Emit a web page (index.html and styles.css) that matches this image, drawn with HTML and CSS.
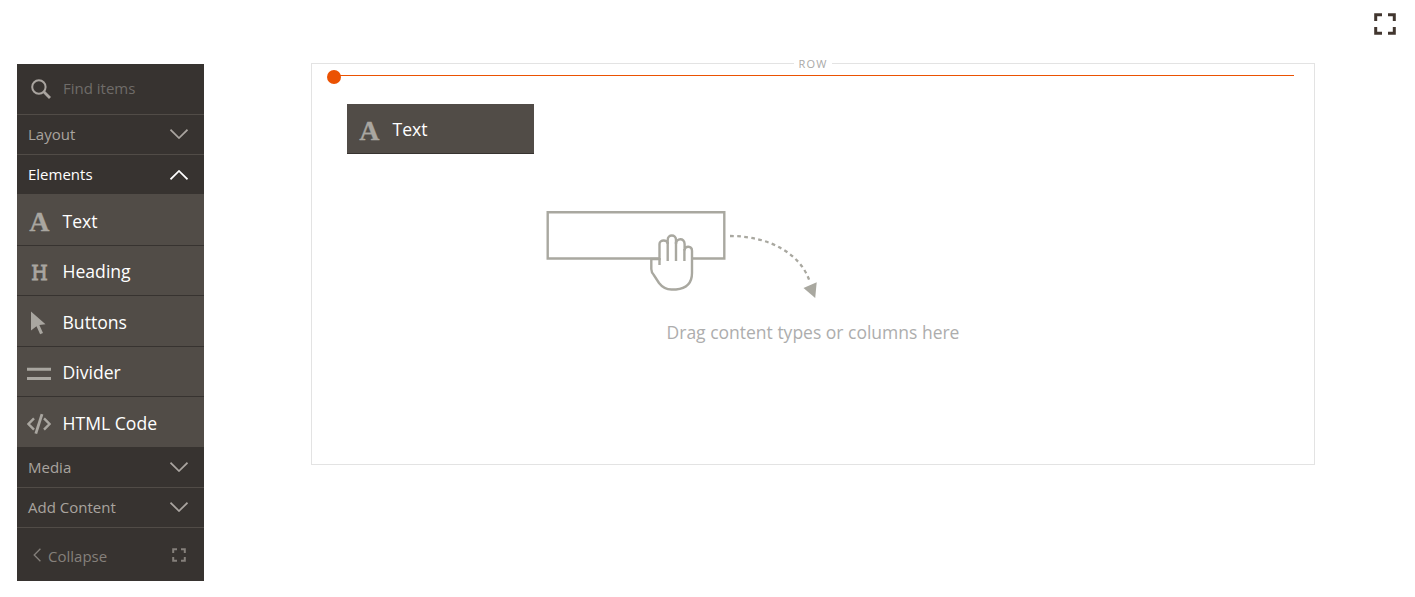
FILE: index.html
```
<!DOCTYPE html>
<html lang="en">
<head>
<meta charset="utf-8">
<title>Page Builder</title>
<link rel="stylesheet" href="styles.css">
</head>
<body>
<div class="page">
  <aside class="panel">
    <div class="search">
      <svg width="20" height="20" viewBox="0 0 20 20" fill="none" stroke="currentColor"><circle cx="7.9" cy="8" r="6.7" stroke-width="2"/><path d="M12.8 12.8 19 19" stroke-width="2.8"/></svg>
      <span>Find items</span>
    </div>
    <div class="group layout"><span>Layout</span><svg class="chev" viewBox="0 0 18 10"><path d="M.5 .7 9 9 17.5 .7"/></svg></div>
    <div class="group open"><span>Elements</span><svg class="chev" viewBox="0 0 18 10"><path d="M.5 9.3 9 1 17.5 9.3"/></svg></div>
    <div class="item first"><span class="icon letter-a">A</span><span>Text</span></div>
    <div class="item"><span class="icon letter-h">H</span><span>Heading</span></div>
    <div class="item tall"><span class="icon"><svg width="24" height="24" viewBox="0 0 24 24" fill="currentColor"><path d="M4 .5 18.5 13.3 12.4 14 16 21.9 13.1 23.3 9.5 15.3 4 19.5Z"/></svg></span><span>Buttons</span></div>
    <div class="item"><span class="icon"><svg width="24" height="24" viewBox="0 0 24 24" fill="currentColor"><path d="M0 5.8H24V8.8H0ZM0 14.9H24V17.9H0Z"/></svg></span><span>Divider</span></div>
    <div class="item last"><span class="icon"><svg width="24" height="24" viewBox="0 0 24 24" fill="none" stroke="currentColor" stroke-width="2.4"><path d="M7 6.3 1.5 12 7 17.7M17 6.3 22.5 12 17 17.7"/><path d="M15 2.2 8.8 21.7" stroke-width="2.8"/></svg></span><span>HTML Code</span></div>
    <div class="group media"><span>Media</span><svg class="chev" viewBox="0 0 18 10"><path d="M.5 .7 9 9 17.5 .7"/></svg></div>
    <div class="group layout"><span>Add Content</span><svg class="chev" viewBox="0 0 18 10"><path d="M.5 .7 9 9 17.5 .7"/></svg></div>
    <div class="footer">
      <svg width="8" height="14" viewBox="0 0 8 14" fill="none" stroke="currentColor" stroke-width="1.3"><path d="M7.4 .8 1.2 7 7.4 13.2"/></svg>
      <span>Collapse</span>
      <svg class="expand" width="14" height="14" viewBox="0 0 14 14" fill="none" stroke="currentColor" stroke-width="2"><path d="M1.2 5V1.2H5M9 1.2H12.8V5M12.8 9V12.8H9M5 12.8H1.2V9"/></svg>
    </div>
  </aside>
  <main class="stage">
    <span class="row-label">ROW</span>
    <div class="drop-line"></div>
    <div class="dragged"><span class="icon letter-a">A</span><span>Text</span></div>
    <svg class="hint-art" width="290" height="105" viewBox="540 200 290 105" fill="none" stroke="#a9a8a0" stroke-width="2.4">
      <path d="M547.7 212.2H724.3V258.5H547.7Z"/>
      <path d="M651.3 259V269Q651.5 272.5 653.5 274.5L659 283Q664 289.5 671.5 289.5H676Q692 288 692 273V251C692 245.5 684.6 245.5 684.6 250.5V244C684.6 237.5 676 238 676 244V240C676 234 667.7 234 667.7 240V244C667.7 239.2 659.5 239.5 659.5 244V259Z" fill="#fff"/>
      <path d="M659.5 258V265M667.7 242V261M676 242V261M684.4 249V261"/>
      <path d="M730 236C771 236 801 255 809.5 281" stroke-width="2.3" stroke-dasharray="3.7 3.4"/>
      <path d="M803.5 288 816.7 282.3 815.2 298Z" fill="#a9a8a0" stroke="none"/>
    </svg>
    <p class="hint">Drag content types or columns here</p>
  </main>
  <svg class="fullscreen" width="22" height="22" viewBox="0 0 22 22" fill="none" stroke="#41362f" stroke-width="3"><path d="M1.7 8V1.7H8M14 1.7H20.3V8M20.3 14V20.3H14M8 20.3H1.7V14"/></svg>
</div>
</body>
</html>
```
FILE: styles.css
```
* { box-sizing: border-box; }
body { margin: 0; background: #fff; font-family: "Open Sans", sans-serif; }
.page {
  width: 1415px;
  height: 597px;
  overflow: hidden;
  display: flex;
  align-items: flex-start;
  padding-left: 17px;
}
.panel {
  width: 187px;
  height: 517px;
  margin-top: 64px;
  background: #373330;
  color: #a9a49f;
  font-size: 15px;
}
.search {
  height: 51px;
  display: flex;
  align-items: center;
  gap: 12px;
  padding: 0 14px 1px;
  border-bottom: 1px solid #514c47;
}
.search span { margin-bottom: 2px; color: #6f6c69; }
.group {
  height: 40px;
  display: flex;
  align-items: center;
  justify-content: space-between;
  padding: 0 16px 0 11px;
  border-bottom: 1px solid #514c47;
}
.layout { padding-bottom: 2px; }
.media { height: 41px; }
.open { color: #fff; }
.open span { margin-bottom: 2px; }
.chev { width: 18px; height: 10px; fill: none; stroke: currentColor; stroke-width: 1.7; }
.item, .dragged {
  height: 50px;
  display: flex;
  align-items: center;
  gap: 11.1px;
  padding: 1px 10px 0;
  background: #514c47;
  border-bottom: 1px solid #373330;
  color: #fff;
  font-size: 17.6px;
}
.item.first, .item.tall { height: 51px; }
.item.last { padding-top: 3px; border-bottom-color: #514c47; }
.icon {
  width: 24px;
  height: 24px;
  flex: none;
  display: flex;
  align-items: center;
  justify-content: center;
  margin: 3px 0 0 .4px;
  color: #a9a6a0;
  line-height: 24px;
}
.item.last .icon { margin-top: 2px; }
.letter-a {
  font-family: "Liberation Serif", serif;
  font-size: 28px;
  font-weight: bold;
  -webkit-text-stroke: .3px #a9a6a0;
}
.letter-h {
  font-family: "DejaVu Serif Condensed", "DejaVu Serif", serif;
  font-stretch: condensed;
  font-size: 21px;
  -webkit-text-stroke: .9px #a9a6a0;
}
.footer {
  height: 52px;
  display: flex;
  align-items: center;
  gap: 7px;
  padding: 4px 18px 0 16px;
  color: #85807b;
}
.footer svg { margin-bottom: 2px; }
.footer .expand { margin-left: auto; }
.stage {
  width: 1004px;
  height: 402px;
  margin: 63px 0 0 107px;
  border: 1px solid #e3e3e3;
  display: flex;
  flex-direction: column;
}
.row-label {
  align-self: center;
  height: 14px;
  margin-top: -7px;
  padding: 0 5px 0 5px;
  background: #fff;
  color: #aaa9a7;
  font-size: 11px;
  line-height: 14px;
  letter-spacing: 1.1px;
}
.drop-line {
  position: relative;
  height: 1px;
  margin: 4px 20px 0 22px;
  background: #eb5202;
}
.drop-line::before {
  content: "";
  position: absolute;
  left: -7px;
  top: -5px;
  width: 14px;
  height: 14px;
  border-radius: 50%;
  background: #eb5202;
}
.dragged { width: 187px; margin: 28px 0 0 35px; }
.dragged .icon { margin-top: 4px; }
.hint-art { display: block; margin: 46px 0 0 228px; }
.hint {
  margin: 15px 0 0;
  text-align: center;
  color: #adadad;
  font-size: 17.5px;
  line-height: 25px;
}
.fullscreen { margin: 13px 0 0 59px; flex: none; }
```
